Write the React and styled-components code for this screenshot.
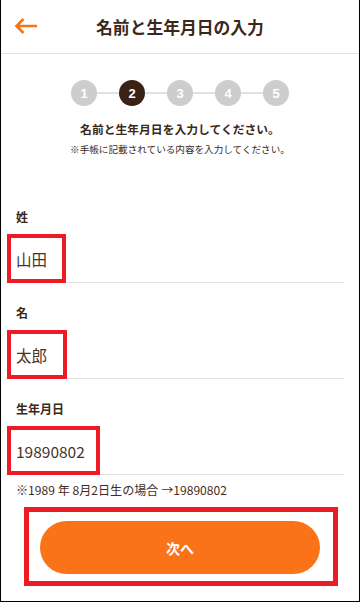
import React from "react";
import styled, { createGlobalStyle } from "styled-components";

const GlobalStyle = createGlobalStyle`
  html, body { margin: 0; padding: 0; background: #fff; }
  * { box-sizing: border-box; }
`;

const BROWN = "#3b2818";
const ORANGE = "#fb7319";
const MARK_RED = "#ed1c24";

const Page = styled.div`
  width: 360px;
  height: 602px;
  border: 1px solid #000;
  border-top: none;
  background: #fff;
  display: flex;
  flex-direction: column;
  overflow: hidden;
  font-family: "Noto Sans CJK JP", "Noto Sans", sans-serif;
  color: ${BROWN};
`;

const Header = styled.header`
  flex: none;
  height: 54px;
  display: grid;
  grid-template-columns: 50px 1fr 50px;
  align-items: center;
  border-bottom: 1px solid #e2e2e2;
`;

const BackButton = styled.button`
  border: none;
  background: none;
  padding: 0 0 1px 13px;
  display: flex;
  align-items: center;
  cursor: pointer;
`;

const Title = styled.h1`
  margin: 0;
  text-align: center;
  font-size: 16.8px;
  font-weight: 700;
  letter-spacing: 0;
  line-height: 20px;
  color: ${BROWN};
`;

const Stepper = styled.ol`
  list-style: none;
  margin: 26px 0 0;
  padding: 0;
  display: flex;
  align-items: center;
  justify-content: center;
`;

const Step = styled.li`
  width: 26px;
  height: 26px;
  border-radius: 50%;
  background: ${(p) => (p.$active ? "#3a2214" : "#cdcdcd")};
  color: #fff;
  font-family: "Liberation Sans", Arial, sans-serif;
  font-weight: 700;
  font-size: 13px;
  display: flex;
  align-items: center;
  justify-content: center;
`;

const Connector = styled.li`
  width: 22px;
  height: 2px;
  background: #e1e1e1;
`;

const Heading = styled.p`
  margin: 14px 0 0;
  text-align: center;
  font-size: 11.8px;
  font-weight: 700;
  line-height: 18px;
`;

const SubNote = styled.p`
  margin: 4px 0 0;
  text-align: center;
  font-size: 9.6px;
  line-height: 14px;
`;

const Form = styled.form`
  margin: 53px 0 0;
  padding: 0 15px;
  display: flex;
  flex-direction: column;
`;

const Field = styled.div`
  display: flex;
  flex-direction: column;
  & + & {
    margin-top: 22px;
  }
`;

const Label = styled.label`
  font-size: 12px;
  font-weight: 700;
  line-height: 16px;
`;

const InputRow = styled.div`
  position: relative;
  margin-top: 10px;
  height: 48px;
  display: flex;
  align-items: center;
  border-bottom: 1px solid #e2e2e2;
  font-size: 15.5px;
  color: #4a3426;
`;

const Mark = styled.span`
  position: absolute;
  left: -9px;
  top: -1px;
  bottom: -1px;
  width: ${(p) => p.$w}px;
  border: 4px solid ${MARK_RED};
  pointer-events: none;
`;

const Hint = styled.p`
  margin: 7px 0 0;
  font-size: 12.1px;
  line-height: 16px;
  color: #3f2c1f;
`;

const Footer = styled.div`
  margin-top: 23px;
  display: flex;
  justify-content: center;
`;

const NextButton = styled.button`
  position: relative;
  width: 280px;
  height: 53px;
  border: none;
  border-radius: 27px;
  background: ${ORANGE};
  color: #fff;
  font-family: "Noto Sans CJK JP", "Noto Sans", sans-serif;
  font-size: 14px;
  font-weight: 700;
  cursor: pointer;
`;

const ButtonMark = styled.span`
  position: absolute;
  left: -16px;
  right: -18px;
  top: -14px;
  bottom: -12px;
  border: 5px solid ${MARK_RED};
  pointer-events: none;
`;

const BackArrow = () => (
  <svg width="24" height="18" viewBox="0 0 24 18" fill="none">
    <path
      d="M2.5 9H23M9.5 2L2.5 9l7 7"
      stroke={ORANGE}
      strokeWidth="2.6"
      strokeLinecap="butt"
      strokeLinejoin="miter"
    />
  </svg>
);

const fields = [
  { label: "姓", value: "山田", mark: 59 },
  { label: "名", value: "太郎", mark: 60 },
  { label: "生年月日", value: "19890802", mark: 93 },
];

export default function App() {
  const steps = [1, 2, 3, 4, 5];
  return (
    <>
      <GlobalStyle />
      <Page>
        <Header>
          <BackButton aria-label="戻る">
            <BackArrow />
          </BackButton>
          <Title>名前と生年月日の入力</Title>
          <span />
        </Header>

        <Stepper>
          {steps.map((n, i) => (
            <React.Fragment key={n}>
              {i > 0 && <Connector />}
              <Step $active={n === 2}>{n}</Step>
            </React.Fragment>
          ))}
        </Stepper>

        <Heading>名前と生年月日を入力してください。</Heading>
        <SubNote>※手帳に記載されている内容を入力してください。</SubNote>

        <Form>
          {fields.map((f) => (
            <Field key={f.label}>
              <Label>{f.label}</Label>
              <InputRow>
                {f.value}
                <Mark $w={f.mark} />
              </InputRow>
            </Field>
          ))}
          <Hint>※1989 年 8月2日生の場合 →19890802</Hint>
        </Form>

        <Footer>
          <NextButton type="button">
            次へ
            <ButtonMark />
          </NextButton>
        </Footer>
      </Page>
    </>
  );
}
